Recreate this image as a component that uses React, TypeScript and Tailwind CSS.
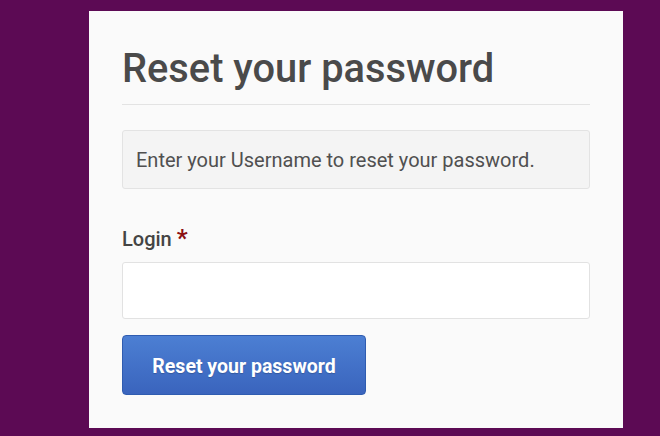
export default function App() {
  return (
    <div className="h-[436px] w-[660px] overflow-hidden bg-[#5c0a54] pt-[11px] pl-[89px] font-['Roboto',sans-serif]">
      <div className="w-[534px] h-[417px] bg-[#fafafa] px-[33px] pt-[30px]">
        <h1 className="text-[39.8px] leading-[56px] text-[#4a4a4a] font-medium">Reset your password</h1>
        <div className="mt-[7px] border-t border-[#e3e3e3]" />
        <div className="mt-[25px] h-[59px] rounded-[3px] border border-[#e3e3e3] bg-[#f4f4f4] flex items-center px-[13px]">
          <p className="text-[20px] text-[#505050]">Enter your Username to reset your password.</p>
        </div>
        <label className="mt-[36px] block text-[20px] font-medium leading-[26px] text-[#444]">
          Login <span className="text-[#8b0f12] text-[24px] font-bold">*</span>
        </label>
        <input
          type="text"
          className="mt-[10px] block h-[57px] w-full rounded-[3px] border border-[#e2e2e2] bg-white"
        />
        <button className="mt-[16px] block h-[60px] w-[244px] rounded-[4px] border border-[#2f5cb0] bg-gradient-to-b from-[#4c7fd3] to-[#3a64bd] pt-[3px] text-[19.5px] font-bold text-white [text-shadow:0_1px_1px_rgba(0,0,0,0.2)]">
          Reset your password
        </button>
      </div>
    </div>
  );
}
